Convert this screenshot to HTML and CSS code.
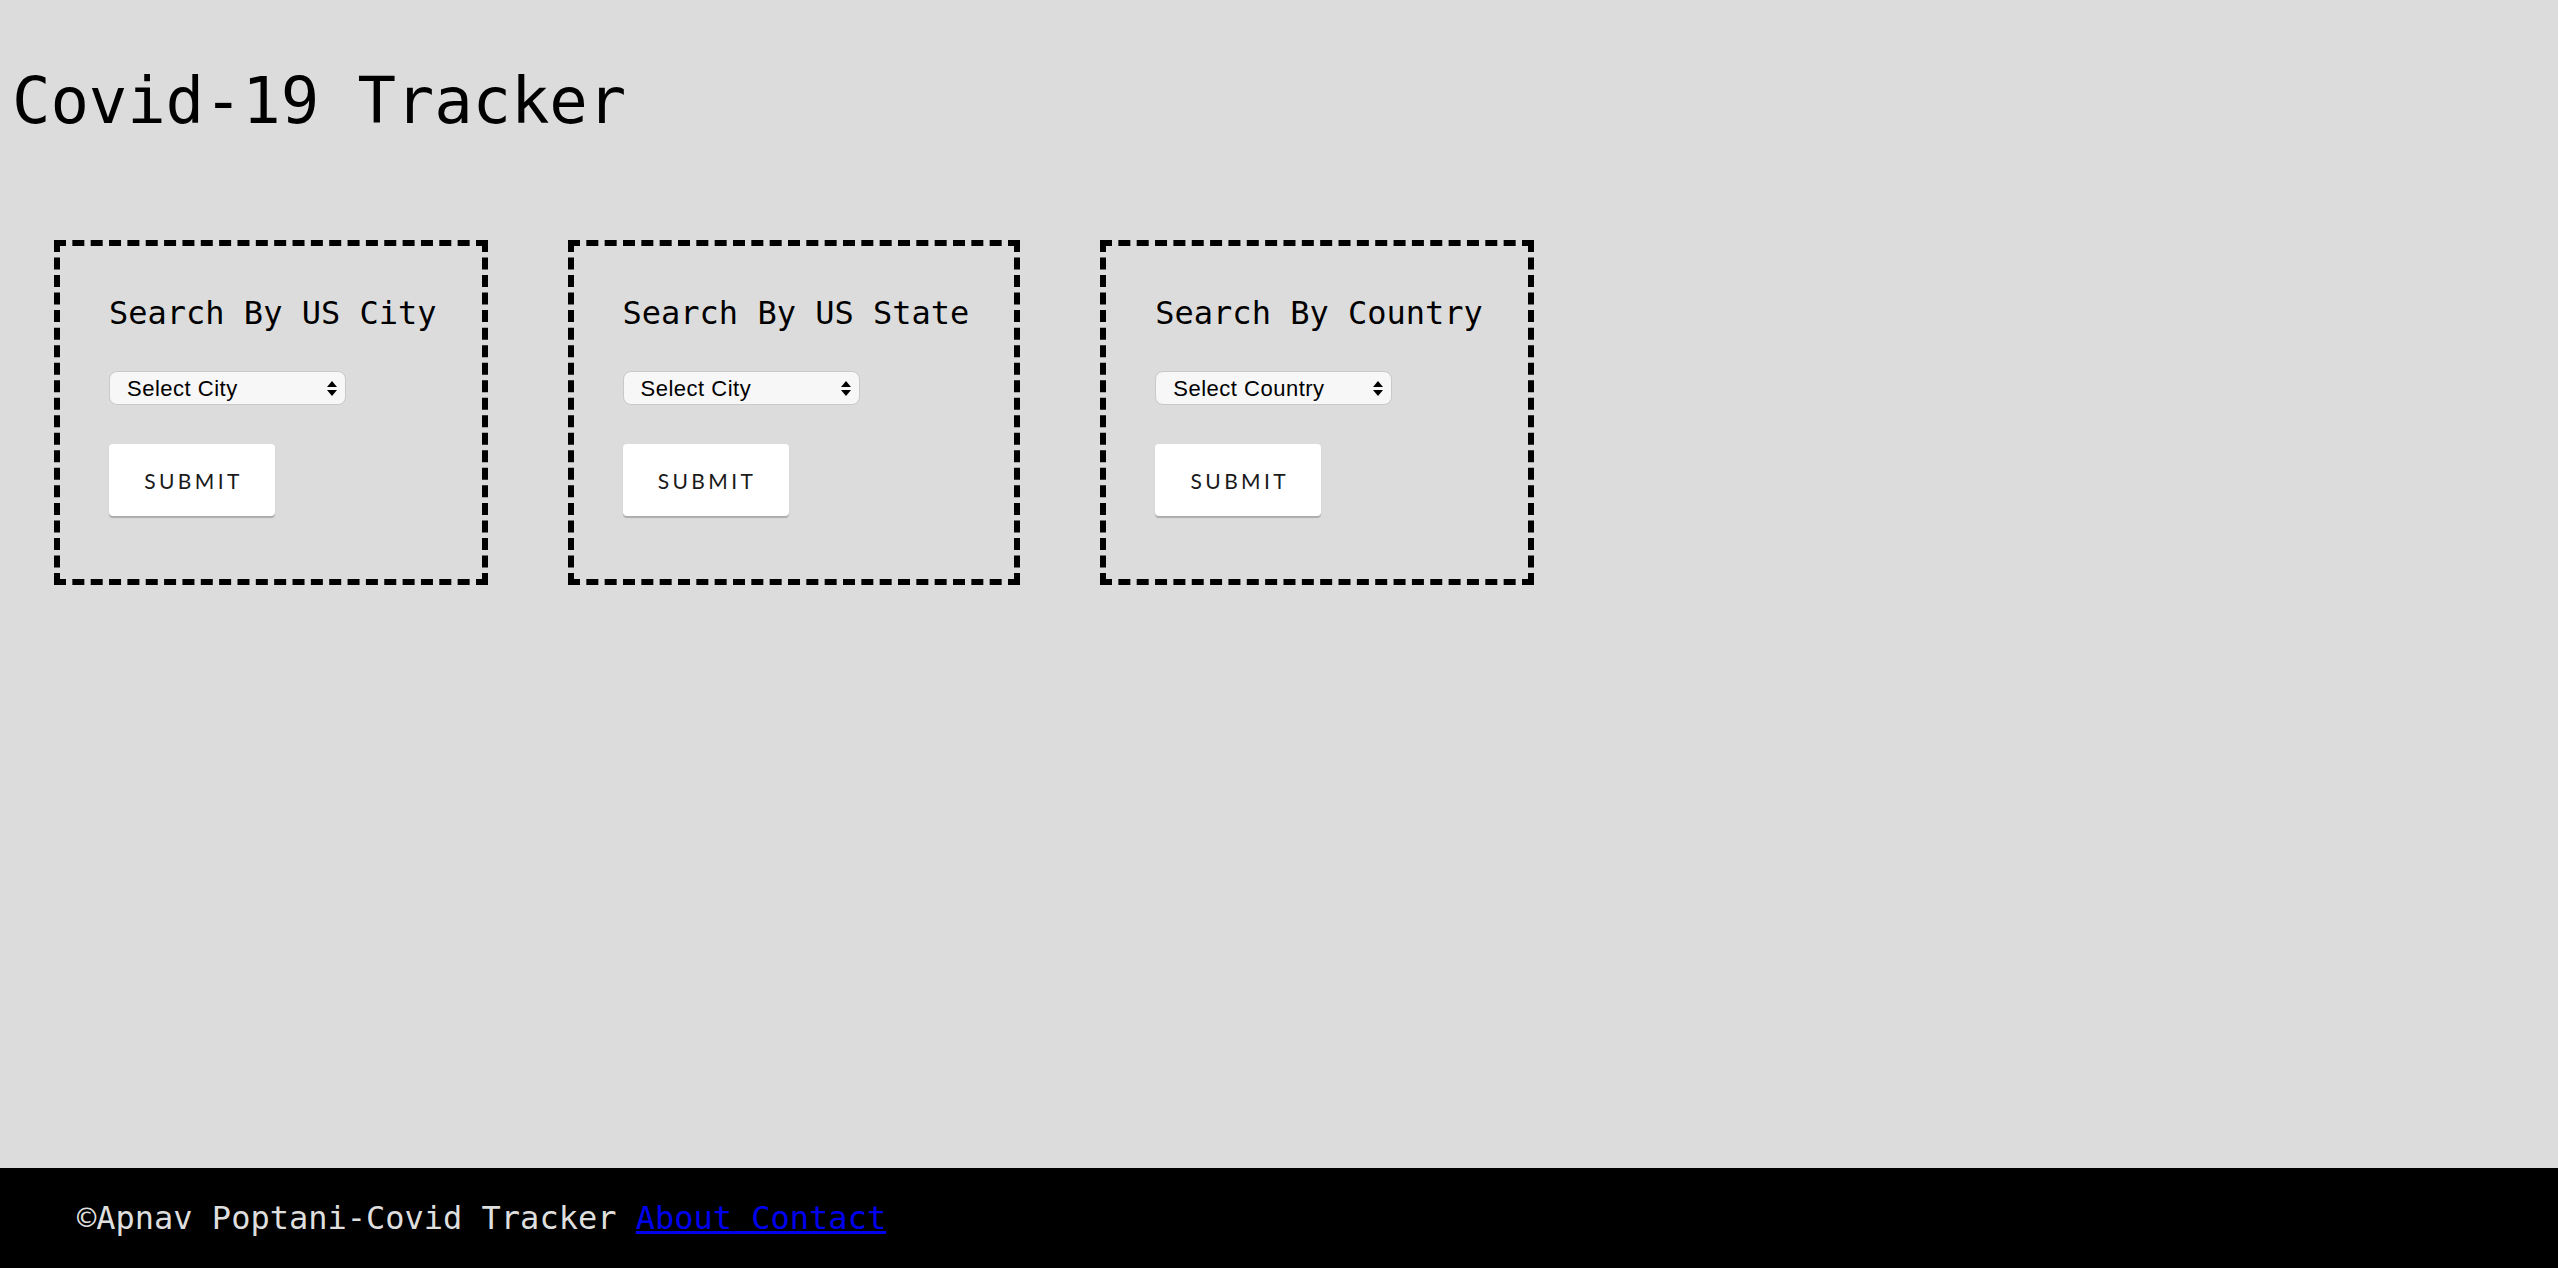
FILE: index.html
```html
<!DOCTYPE html>
<html lang="en">
<head>
<meta charset="utf-8">
<title>Covid-19 Tracker</title>
<link rel="stylesheet" href="styles.css">
</head>
<body>
<div class="page">
  <header class="header">
    <h1 class="title">Covid-19 Tracker</h1>
  </header>
  <main class="cards">
    <section class="card">
      <h2 class="card-title">Search By US City</h2>
      <div class="select-wrap">
        <select class="select"><option>Select City</option></select>
        <svg class="select-arrows" width="10" height="16" viewBox="0 0 10 16"><path d="M5 0 L10 6 L0 6 Z M0 9 L10 9 L5 15 Z" fill="#000"/></svg>
      </div>
      <button class="btn" type="button">SUBMIT</button>
    </section>
    <section class="card">
      <h2 class="card-title">Search By US State</h2>
      <div class="select-wrap">
        <select class="select"><option>Select City</option></select>
        <svg class="select-arrows" width="10" height="16" viewBox="0 0 10 16"><path d="M5 0 L10 6 L0 6 Z M0 9 L10 9 L5 15 Z" fill="#000"/></svg>
      </div>
      <button class="btn" type="button">SUBMIT</button>
    </section>
    <section class="card">
      <h2 class="card-title">Search By Country</h2>
      <div class="select-wrap">
        <select class="select"><option>Select Country</option></select>
        <svg class="select-arrows" width="10" height="16" viewBox="0 0 10 16"><path d="M5 0 L10 6 L0 6 Z M0 9 L10 9 L5 15 Z" fill="#000"/></svg>
      </div>
      <button class="btn" type="button">SUBMIT</button>
    </section>
  </main>
  <footer class="footer">
    <p class="footer-text">©Apnav Poptani-Covid Tracker <a class="footer-link" href="#">About Contact</a></p>
  </footer>
</div>
</body>
</html>
```
FILE: styles.css
```css
html, body {
  margin: 0;
  padding: 0;
}

body {
  background: #dcdcdc;
  font-family: "DejaVu Sans Mono", monospace;
  color: #000;
}

.page {
  display: flex;
  flex-direction: column;
  min-height: 100vh;
}

.header {
  padding: 69px 0 0 12px;
}

.title {
  margin: 0;
  font-size: 64px;
  line-height: 64px;
  font-weight: normal;
  letter-spacing: -0.15px;
}

.cards {
  display: flex;
  align-items: flex-start;
  gap: 80px;
  padding: 107px 0 0 54px;
}

.card {
  border: 6px dashed #000;
  padding: 51px 45px 63px 48px;
}

.card-title {
  margin: 0 0 42px 1px;
  font-size: 32px;
  line-height: 32px;
  font-weight: normal;
  white-space: nowrap;
}

.select-wrap {
  position: relative;
  width: 237px;
  margin: 0 0 39px 1px;
}

.select {
  appearance: none;
  -webkit-appearance: none;
  display: block;
  width: 237px;
  height: 34px;
  box-sizing: border-box;
  border: 1px solid #c9c9c9;
  border-radius: 8px;
  background: #f7f7f7;
  padding: 0 0 0 17px;
  font-family: "Liberation Sans", Arial, sans-serif;
  font-size: 22px;
  letter-spacing: 0.5px;
  color: #000;
}

.select-arrows {
  position: absolute;
  right: 9px;
  top: 10px;
  pointer-events: none;
}

.btn {
  display: block;
  margin-left: 1px;
  height: 72px;
  width: 166px;
  padding: 0 0 0 3px;
  border: none;
  border-radius: 4px;
  background: #fff;
  box-shadow: 0 2px 1px rgba(0, 0, 0, 0.22);
  font-family: Lato, "Open Sans", sans-serif;
  font-size: 21px;
  font-weight: 400;
  letter-spacing: 3.4px;
  color: #1a1a1a;
}

.footer {
  margin-top: auto;
  height: 100px;
  background: #000;
  display: flex;
  align-items: center;
  padding-left: 77px;
}

.footer-text {
  margin: 0;
  font-size: 32px;
  color: #dedede;
}

.footer-link {
  color: #0000ee;
}
```
